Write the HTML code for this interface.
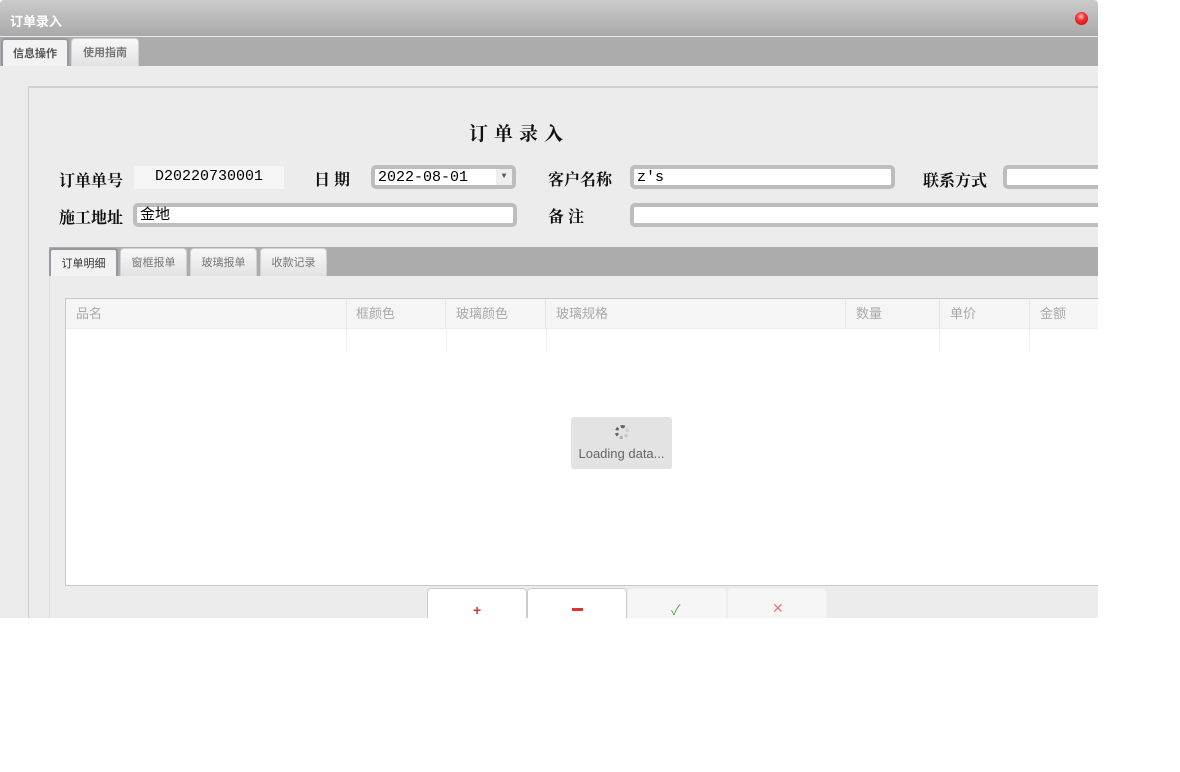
<!DOCTYPE html><html><head><meta charset="utf-8"><style>
body{margin:0;width:1180px;height:772px;background:#fff;position:relative;overflow:hidden;font-family:"Liberation Sans","Noto Sans CJK SC",sans-serif}
.a{position:absolute}
.win{left:0;top:0;width:1098px;height:618px;background:#ececec;overflow:hidden;border-radius:4px 4px 0 0}
.title{left:0;top:0;width:1098px;height:36px;background:linear-gradient(#cbcbcb,#a9a9a9);border-bottom:1px solid #e8e8e8}
.title span{position:absolute;left:10px;top:11px;color:#fff;font-size:13px;font-weight:bold}
.strip{background:#acacac}
.tab{position:absolute;height:28px;background:linear-gradient(#f8f8f8,#e2e2e2);border-radius:4px 4px 0 0;font-size:11px;color:#777;font-weight:bold;text-align:center;line-height:28px;box-sizing:border-box;border:1px solid #d0d0d0;border-bottom:none}
.tab.on{background:#f2f2f2;color:#555;border:2px solid #9a96a0;border-bottom:none}
.lbl{font-family:"Liberation Serif","Noto Serif CJK SC",serif;font-weight:bold;font-size:16px;color:#111}
.inp{position:absolute;height:22px;box-sizing:border-box;border:4px solid #bdbdbd;border-radius:5px;background:#fff;font-family:"Liberation Mono","Noto Sans CJK SC",monospace;font-size:15px;line-height:17px;padding-left:3px;color:#000}
.th{position:absolute;top:0;height:29px;line-height:30px;font-size:13px;color:#aaa;padding-left:10px;border-right:1px solid #e6e6e6;box-sizing:border-box}
.btn{position:absolute;top:588px;width:100px;height:40px;border:1px solid #ccc;border-radius:4px;box-sizing:border-box;background:linear-gradient(#fff 0,#fff 38px,#ececec 38px)}
</style></head><body>
<div class="a win">
<div class="a title"><span>订单录入</span>
<div class="a" style="left:1075px;top:12px;width:13px;height:13px;border-radius:50%;background:radial-gradient(circle at 45% 35%,#fcc 0,#f33 35%,#b00 100%)"></div></div>
<div class="a strip" style="left:0;top:37px;width:1098px;height:29px"></div>
<div class="tab on" style="left:1px;top:38px;width:68px">信息操作</div>
<div class="tab" style="left:71px;top:38px;width:68px">使用指南</div>
<div class="a" style="left:28px;top:86px;width:1080px;height:540px;border:1px solid #ccc;border-top:2px solid #d0d0d0;background:#ececec"></div>
<div class="a lbl" style="left:469px;top:119px;font-size:19px;letter-spacing:6px">订单录入</div>
<div class="a lbl" style="left:59px;top:168px">订单单号</div>
<div class="a" style="left:134px;top:166px;width:150px;height:23px;background:#f5f5f5;font-family:'Liberation Mono',monospace;font-size:15px;text-align:center;line-height:22px">D20220730001</div>
<div class="a lbl" style="left:314px;top:167px">日 期</div>
<div class="inp" style="left:371px;top:165px;width:145px;height:24px">2022-08-01<span style="position:absolute;right:0;top:0;width:16px;height:16px;background:#eee;font-size:8px;color:#555;text-align:center;line-height:16px">▼</span></div>
<div class="a lbl" style="left:548px;top:167px">客户名称</div>
<div class="inp" style="left:630px;top:165px;width:265px;height:24px">z's</div>
<div class="a lbl" style="left:923px;top:168px">联系方式</div>
<div class="inp" style="left:1003px;top:165px;width:120px;height:24px"></div>
<div class="a lbl" style="left:59px;top:205px">施工地址</div>
<div class="inp" style="left:133px;top:203px;width:384px;height:24px">金地</div>
<div class="a lbl" style="left:548px;top:204px">备 注</div>
<div class="inp" style="left:630px;top:203px;width:500px;height:24px"></div>
<div class="a strip" style="left:49px;top:247px;width:1060px;height:29px"></div>
<div class="a" style="left:49px;top:276px;width:1060px;height:350px;background:#ececec;border-left:1px solid #ddd"></div>
<div class="tab on" style="left:49px;top:248px;width:69px;font-weight:normal;color:#333">订单明细</div>
<div class="tab" style="left:120px;top:248px;width:67px;font-weight:normal">窗框报单</div>
<div class="tab" style="left:190px;top:248px;width:67px;font-weight:normal">玻璃报单</div>
<div class="tab" style="left:260px;top:248px;width:67px;font-weight:normal">收款记录</div>
<div class="a" style="left:65px;top:298px;width:1060px;height:288px;background:#fff;border:1px solid #c8c8c8;box-sizing:border-box">
<div class="a" style="left:0;top:0;width:1060px;height:29px;background:#f5f5f5;border-bottom:1px solid #eee"></div>
<div class="th" style="left:0;width:281px">品名</div>
<div class="th" style="left:280px;width:100px">框颜色</div>
<div class="th" style="left:380px;width:100px">玻璃颜色</div>
<div class="th" style="left:480px;width:300px">玻璃规格</div>
<div class="th" style="left:780px;width:94px">数量</div>
<div class="th" style="left:874px;width:90px">单价</div>
<div class="th" style="left:964px;width:100px">金额</div>
<div class="a" style="left:280px;top:29px;width:1px;height:24px;background:#f0f0f0"></div>
<div class="a" style="left:380px;top:29px;width:1px;height:24px;background:#f0f0f0"></div>
<div class="a" style="left:480px;top:29px;width:1px;height:24px;background:#f0f0f0"></div>
<div class="a" style="left:873px;top:29px;width:1px;height:24px;background:#f0f0f0"></div>
<div class="a" style="left:963px;top:29px;width:1px;height:24px;background:#f0f0f0"></div>
</div>
<div class="a" style="left:571px;top:417px;width:101px;height:52px;background:#e3e3e3;border-radius:3px;text-align:center;font-size:13px;color:#666">
<div style="margin:8px auto 0;width:14px;height:14px;border-radius:50%;border:3px dotted #666;box-sizing:border-box;border-right-color:#ccc;border-bottom-color:#aaa"></div>
<div style="margin-top:7px">Loading data...</div></div>
<div class="btn" style="left:427px"><span class="a" style="left:45px;top:13px;color:#d33;font-weight:bold;font-size:14px">+</span></div>
<div class="btn" style="left:527px"><span class="a" style="left:44px;top:19px;width:11px;height:3px;background:#d33"></span></div>
<div class="btn" style="left:627px;background:#f6f6f6;border-color:#eee"><span class="a" style="left:43px;top:11px;color:#6a6;font-size:14px">✓</span></div>
<div class="btn" style="left:727px;background:#f6f6f6;border-color:#eee"><span class="a" style="left:44px;top:11px;color:#e77;font-size:14px">✕</span></div>
</div>
</body></html>
